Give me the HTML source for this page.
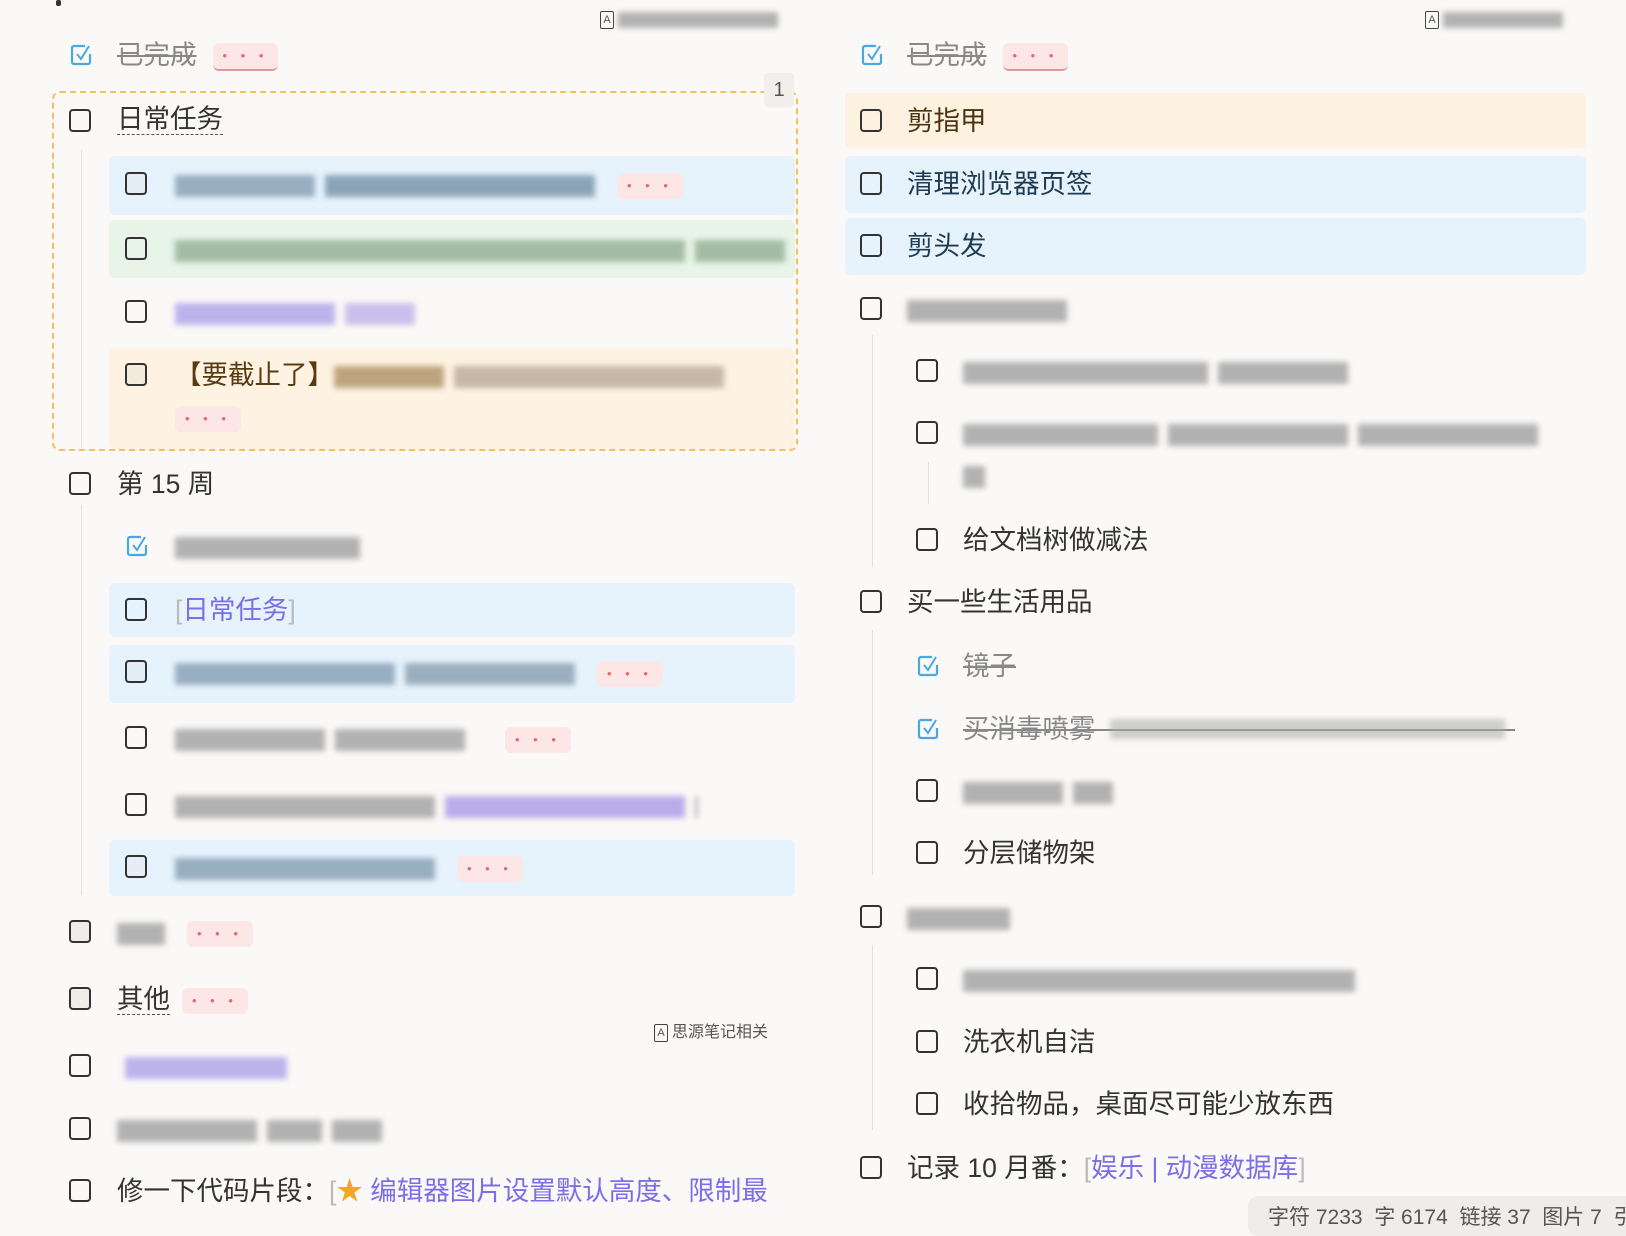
<!DOCTYPE html>
<html><head><meta charset="utf-8"><style>
body{margin:0;width:1626px;height:1216px;background:#faf9f7;position:relative;overflow:hidden;font-family:"Liberation Sans","Noto Sans CJK SC",sans-serif;}
.a{position:absolute}
.t{position:absolute;height:34px;line-height:34px;font-size:26.5px;color:#333;white-space:nowrap}
.cb{position:absolute;width:18px;height:19px;border:2.6px solid #333;border-radius:4px}
.ck{position:absolute;width:24px;height:24px}
.b{display:inline-block;height:22px;vertical-align:middle;filter:blur(3px);background:#9a9a9a;opacity:.75;margin-right:10px}
.d{display:inline-block;background:#fde6e6;border-radius:6px;color:#e46a6a;font-size:13px;padding:0 10px;height:26px;line-height:26px;letter-spacing:5px;vertical-align:middle;margin-left:12px}
.bg{position:absolute;border-radius:6px}
.vl{position:absolute;width:1px;background:#e2e0dc}
.lk{color:#7b6ee6}
.br{color:#bbb}
.s{text-decoration:line-through;color:#888}
.tag{position:absolute;font-size:16px;color:#555;white-space:nowrap;height:22px;line-height:22px}
.tag i{display:inline-block;width:12px;height:16px;border:1.6px solid #444;border-radius:2px;font-style:normal;font-size:11px;line-height:16px;text-align:center;vertical-align:middle;margin-right:4px}
</style></head><body>
<svg width="0" height="0" style="position:absolute"><defs><symbol id="ck" viewBox="0 0 24 24"><path d="M16 3H5a2 2 0 0 0-2 2v14a2 2 0 0 0 2 2h14a2 2 0 0 0 2-2v-8" fill="none" stroke="#4aa8e0" stroke-width="2.2"/><path d="M8 11l4 5 8-13" fill="none" stroke="#4aa8e0" stroke-width="2"/></symbol></defs></svg>
<div class="a" style="left:56px;top:0;width:5px;height:6px;background:#333;border-radius:2px"></div>

<div class="tag" style="left:600px;top:9px"><i>A</i><span class="b" style="width:160px;height:16px"></span></div>
<div class="tag" style="left:1425px;top:9px"><i>A</i><span class="b" style="width:120px;height:16px"></span></div>

<!-- LEFT COLUMN -->
<svg class="ck" style="left:69px;top:43px"><use href="#ck"/></svg>
<div class="t s" style="left:117px;top:38px">已完成<span class="d" style="border-bottom:2px solid #d99;margin-left:16px">• • •</span></div>

<div class="bg" style="left:109px;top:156px;width:686px;height:59px;background:#e6f3fd"></div>
<div class="bg" style="left:109px;top:220px;width:686px;height:58px;background:#e7f4e7"></div>
<div class="bg" style="left:109px;top:348px;width:686px;height:101px;background:#fef2e2"></div>
<div class="a" style="left:52px;top:91px;width:746px;height:360px;border:2.5px dashed #f5bf5a;border-radius:8px;box-sizing:border-box;z-index:5"></div>
<div class="a" style="left:764px;top:73px;width:30px;height:34px;background:#f1efeb;border-radius:4px;font-size:20px;color:#555;text-align:center;line-height:34px;z-index:6">1</div>
<div class="vl" style="left:81px;top:150px;height:298px"></div>

<div class="cb" style="left:69px;top:109px"></div>
<div class="t" style="left:117px;top:104px;border-bottom:1.5px dashed #555;height:30px;line-height:30px">日常任务</div>
<div class="cb" style="left:125px;top:172px;background:#e6eef5"></div>
<div class="t" style="left:175px;top:167px"><span class="b" style="width:140px;background:#7e97ad"></span><span class="b" style="width:270px;background:#6f8aa3"></span><span class="d">• • •</span></div>
<div class="cb" style="left:125px;top:237px"></div>
<div class="t" style="left:175px;top:232px"><span class="b" style="width:510px;background:#8da98e"></span><span class="b" style="width:90px;background:#8da98e"></span></div>
<div class="cb" style="left:125px;top:300px"></div>
<div class="t" style="left:175px;top:295px"><span class="b" style="width:160px;background:#a89ce8"></span><span class="b" style="width:70px;background:#b8aee8"></span></div>
<div class="cb" style="left:125px;top:363px;background:#f3eadd"></div>
<div class="t" style="left:175px;top:358px;color:#5a3a10">【要截止了】<span class="b" style="width:110px;background:#a88b5e"></span><span class="b" style="width:270px;background:#b2a592"></span></div>
<div class="t" style="left:163px;top:400px"><span class="d">• • •</span></div>

<div class="cb" style="left:69px;top:472px"></div>
<div class="t" style="left:117px;top:467px">第 15 周</div>
<div class="vl" style="left:81px;top:505px;height:390px"></div>
<div class="bg" style="left:109px;top:583px;width:686px;height:54px;background:#e6f3fd"></div>
<div class="bg" style="left:109px;top:645px;width:686px;height:58px;background:#e6f3fd"></div>
<div class="bg" style="left:109px;top:840px;width:686px;height:56px;background:#e6f3fd"></div>

<svg class="ck" style="left:125px;top:534px"><use href="#ck"/></svg>
<div class="t" style="left:175px;top:529px"><span class="b" style="width:185px"></span></div>
<div class="cb" style="left:125px;top:598px"></div>
<div class="t" style="left:175px;top:593px"><span class="br">[</span><span class="lk">日常任务</span><span class="br">]</span></div>
<div class="cb" style="left:125px;top:660px;background:#e6eef5"></div>
<div class="t" style="left:175px;top:655px"><span class="b" style="width:220px;background:#7e97ad"></span><span class="b" style="width:170px;background:#8198aa"></span><span class="d">• • •</span></div>
<div class="cb" style="left:125px;top:726px"></div>
<div class="t" style="left:175px;top:721px"><span class="b" style="width:150px"></span><span class="b" style="width:130px"></span><span class="d" style="margin-left:30px">• • •</span></div>
<div class="cb" style="left:125px;top:793px"></div>
<div class="t" style="left:175px;top:788px"><span class="b" style="width:260px"></span><span class="b" style="width:240px;background:#a293e8"></span><span class="b" style="width:3px"></span></div>
<div class="cb" style="left:125px;top:855px;background:#e6eef5"></div>
<div class="t" style="left:175px;top:850px"><span class="b" style="width:260px;background:#7e97ad"></span><span class="d">• • •</span></div>

<div class="cb" style="left:69px;top:920px;background:#efedea"></div>
<div class="t" style="left:117px;top:915px"><span class="b" style="width:48px"></span><span class="d">• • •</span></div>
<div class="cb" style="left:69px;top:987px;background:#efedea"></div>
<div class="t" style="left:117px;top:982px"><span style="border-bottom:1.5px dashed #555">其他</span><span class="d">• • •</span></div>
<div class="tag" style="left:654px;top:1022px"><i>A</i>思源笔记相关</div>
<div class="cb" style="left:69px;top:1054px"></div>
<div class="t" style="left:125px;top:1049px"><span class="b" style="width:162px;background:#a89ce8"></span></div>
<div class="cb" style="left:69px;top:1117px"></div>
<div class="t" style="left:117px;top:1112px"><span class="b" style="width:140px"></span><span class="b" style="width:55px"></span><span class="b" style="width:50px"></span></div>
<div class="cb" style="left:69px;top:1179px"></div>
<div class="t" style="left:117px;top:1174px">修一下代码片段：<span class="br">[</span><span style="color:#f5a623">★</span> <span class="lk">编辑器图片设置默认高度、限制最</span></div>

<!-- RIGHT COLUMN -->
<svg class="ck" style="left:860px;top:43px"><use href="#ck"/></svg>
<div class="t s" style="left:907px;top:38px">已完成<span class="d" style="border-bottom:2px solid #d99;margin-left:16px">• • •</span></div>
<div class="bg" style="left:845px;top:93px;width:741px;height:55px;background:#fdf1e0"></div>
<div class="bg" style="left:845px;top:156px;width:741px;height:57px;background:#e6f3fd"></div>
<div class="bg" style="left:845px;top:218px;width:741px;height:57px;background:#e6f3fd"></div>
<div class="cb" style="left:860px;top:109px"></div>
<div class="t" style="left:907px;top:104px;color:#4a3210">剪指甲</div>
<div class="cb" style="left:860px;top:172px"></div>
<div class="t" style="left:907px;top:167px;color:#1e3a50">清理浏览器页签</div>
<div class="cb" style="left:860px;top:234px"></div>
<div class="t" style="left:907px;top:229px;color:#1e3a50">剪头发</div>

<div class="cb" style="left:860px;top:297px"></div>
<div class="t" style="left:907px;top:292px"><span class="b" style="width:160px"></span></div>
<div class="vl" style="left:872px;top:335px;height:232px"></div>
<div class="cb" style="left:916px;top:359px"></div>
<div class="t" style="left:963px;top:354px"><span class="b" style="width:245px"></span><span class="b" style="width:130px"></span></div>
<div class="cb" style="left:916px;top:421px"></div>
<div class="t" style="left:963px;top:416px"><span class="b" style="width:195px"></span><span class="b" style="width:180px"></span><span class="b" style="width:180px"></span></div>
<div class="vl" style="left:928px;top:462px;height:42px"></div>
<div class="t" style="left:963px;top:458px"><span class="b" style="width:22px"></span></div>
<div class="cb" style="left:916px;top:528px"></div>
<div class="t" style="left:963px;top:523px">给文档树做减法</div>

<div class="cb" style="left:860px;top:590px"></div>
<div class="t" style="left:907px;top:585px">买一些生活用品</div>
<div class="vl" style="left:872px;top:630px;height:245px"></div>
<svg class="ck" style="left:916px;top:654px"><use href="#ck"/></svg>
<div class="t s" style="left:963px;top:649px">镜子</div>
<svg class="ck" style="left:916px;top:717px"><use href="#ck"/></svg>
<div class="t s" style="left:963px;top:712px">买消毒喷雾</div>
<div class="a" style="left:1095px;top:729px;width:420px;height:2px;background:#888"></div>
<div class="a" style="left:1110px;top:719px;width:395px;height:20px;filter:blur(3px);background:#aaa;opacity:.55"></div>
<div class="cb" style="left:916px;top:779px"></div>
<div class="t" style="left:963px;top:774px"><span class="b" style="width:100px"></span><span class="b" style="width:40px"></span></div>
<div class="cb" style="left:916px;top:841px"></div>
<div class="t" style="left:963px;top:836px">分层储物架</div>

<div class="cb" style="left:860px;top:905px"></div>
<div class="t" style="left:907px;top:900px"><span class="b" style="width:103px"></span></div>
<div class="vl" style="left:872px;top:945px;height:185px"></div>
<div class="cb" style="left:916px;top:967px"></div>
<div class="t" style="left:963px;top:962px"><span class="b" style="width:392px"></span></div>
<div class="cb" style="left:916px;top:1030px"></div>
<div class="t" style="left:963px;top:1025px">洗衣机自洁</div>
<div class="cb" style="left:916px;top:1092px"></div>
<div class="t" style="left:963px;top:1087px">收拾物品，桌面尽可能少放东西</div>
<div class="cb" style="left:860px;top:1156px"></div>
<div class="t" style="left:907px;top:1151px">记录 10 月番：<span class="br">[</span><span class="lk">娱乐 | 动漫数据库</span><span class="br">]</span></div>

<div class="a" style="left:1248px;top:1196px;width:400px;height:40px;background:#efede9;border-radius:10px;font-size:21px;color:#555;padding:5px 0 0 20px;box-sizing:border-box;white-space:nowrap">字符 7233&nbsp;&nbsp;字 6174&nbsp;&nbsp;链接 37&nbsp;&nbsp;图片 7&nbsp;&nbsp;引</div>
</body></html>
